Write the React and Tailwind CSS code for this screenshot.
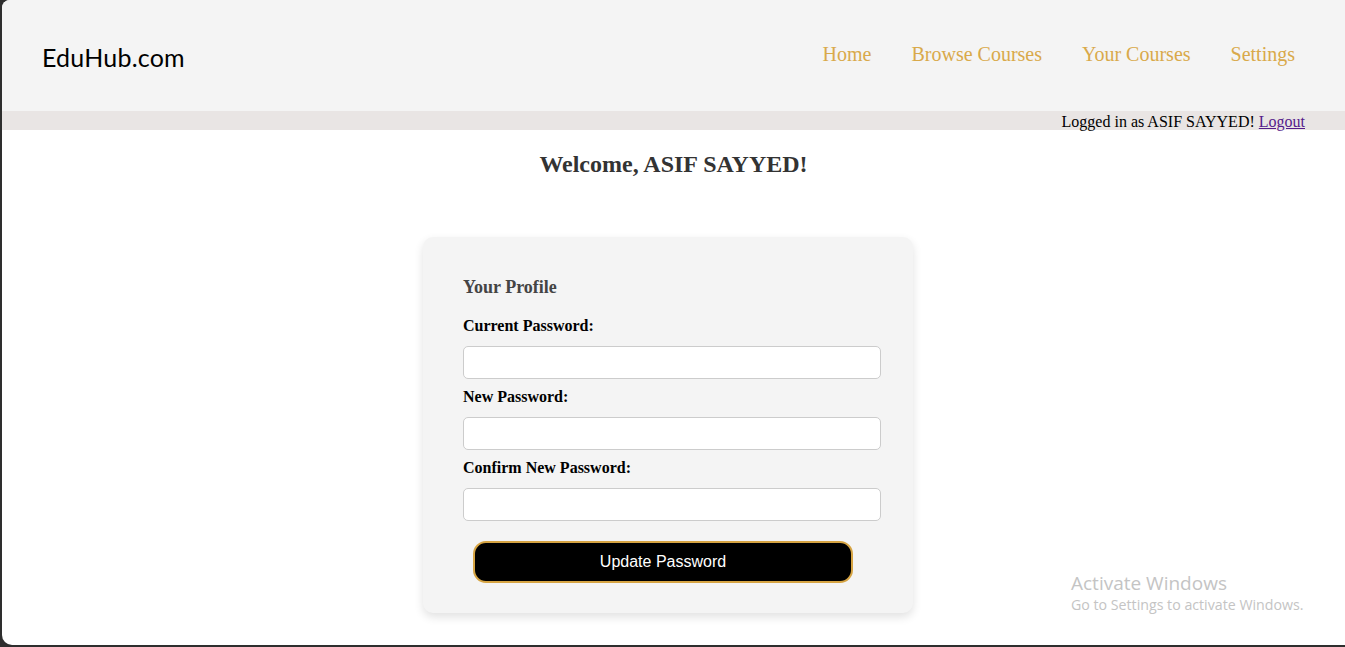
import React from "react";

const serif = { fontFamily: '"Liberation Serif", "Times New Roman", serif' };

function Field({ label }) {
  return (
    <div className="flex flex-col">
      <label className="text-[16px] font-bold text-black leading-[20px]">{label}</label>
      <input
        type="password"
        className="mt-[10px] w-[418px] h-[33px] bg-white border border-[#cccccc] rounded-[5px] px-2 outline-none"
      />
    </div>
  );
}

export default function App() {
  return (
    <div className="w-full h-[647px] bg-[#2e2e2e] overflow-hidden">
      <div
        className="relative ml-[2px] h-[645px] bg-white rounded-tl-[8px] rounded-bl-[10px] overflow-hidden flex flex-col"
        style={serif}
      >
        {/* header */}
        <header className="h-[111px] bg-[#f4f4f4] flex items-center justify-between pl-[40px] pr-[50px]">
          <div
            className="text-[25px] text-black tracking-[0.2px] mt-[4px]"
            style={{ fontFamily: '"Lato", "Open Sans", sans-serif' }}
          >
            EduHub.com
          </div>
          <nav className="flex items-center gap-[40px] text-[20px] text-[#d9a94a] -mt-[3px]">
            <a>Home</a>
            <a>Browse Courses</a>
            <a>Your Courses</a>
            <a>Settings</a>
          </nav>
        </header>

        {/* logged in bar */}
        <div className="h-[19px] bg-[#e9e5e4] flex items-center justify-end pr-[40px] text-[16px] text-black leading-none">
          <span className="mt-[2px]">
            Logged in as ASIF SAYYED!{" "}
            <a className="text-[#551a8b] underline">Logout</a>
          </span>
        </div>

        {/* welcome */}
        <h1 className="mt-[20px] text-center text-[24px] font-bold text-[#333333] leading-[28px]">
          Welcome, ASIF SAYYED!
        </h1>

        {/* profile card */}
        <div className="mt-[59px] self-center ml-[-11px] w-[490px] bg-[#f4f4f4] rounded-[10px] shadow-[0_4px_10px_rgba(0,0,0,0.12)] pt-[40px] pb-[30px] pl-[40px]">
          <h2 className="text-[18px] font-bold text-[#444444] leading-[20px]">Your Profile</h2>
          <div className="mt-[19px] flex flex-col gap-[8px]">
            <Field label="Current Password:" />
            <Field label="New Password:" />
            <Field label="Confirm New Password:" />
          </div>
          <button
            className="mt-[20px] ml-[10px] w-[380px] h-[42px] bg-black text-white border-2 border-[#d6a443] rounded-[13px] text-[16px]"
            style={{ fontFamily: '"Liberation Sans", Arial, sans-serif' }}
          >
            Update Password
          </button>
        </div>

        {/* windows watermark */}
        <div
          className="absolute left-[1069px] top-[571px] text-[#c4c4c4] pointer-events-none"
          style={{ fontFamily: '"Open Sans", "Noto Sans", sans-serif' }}
        >
          <div className="text-[19px] leading-[24px]">Activate Windows</div>
          <div className="text-[14.2px] leading-[18px] mt-[1px]">Go to Settings to activate Windows.</div>
        </div>
      </div>
    </div>
  );
}
